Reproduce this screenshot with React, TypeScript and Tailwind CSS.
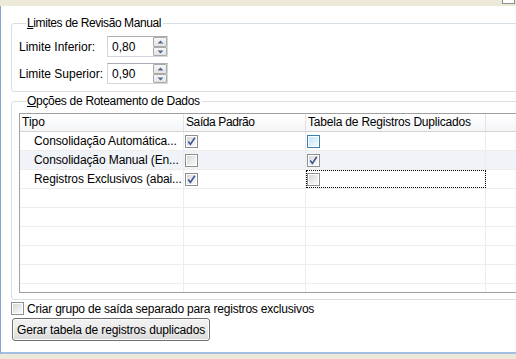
import React from "react";

function Check({ checked = false, hover = false }: { checked?: boolean; hover?: boolean }) {
  return (
    <div
      className={
        hover
          ? "relative w-[13px] h-[13px] shrink-0 border border-[#3C7FB1] bg-white p-[1px]"
          : "relative w-[13px] h-[13px] shrink-0 border border-[#8E8F8F] bg-white p-[1px]"
      }
    >
      <div
        className={
          hover
            ? "w-full h-full bg-linear-to-br from-[#C4E5F8] to-[#EEF8FE]"
            : "w-full h-full bg-linear-to-br from-[#D8D8D8] to-[#FAFAFA]"
        }
      />
      {checked && (
        <svg className="absolute left-0 top-0" width="11" height="11" viewBox="0 0 11 11">
          <path d="M2.3 5.6 L4.4 8.4 L8.8 1.8" stroke="#3D5497" strokeWidth="1.6" fill="none" />
        </svg>
      )}
    </div>
  );
}

function Spin({ value }: { value: string }) {
  return (
    <div className="flex h-[21px] w-[61px] border border-[#D3D6DB] border-t-[#ABADB3] bg-white">
      <div className="flex-1 pl-[4px] flex items-center leading-[14px]">{value}</div>
      <div className="flex flex-col w-[14px] gap-0">
        <div className="h-[10px] border border-[#A9A9A9] rounded-[1px] bg-linear-to-b from-[#F7F7F7] to-[#E3E3E3] flex items-center justify-center">
          <svg width="7" height="4" viewBox="0 0 7 4">
            <path d="M0.5 3.5 L3.5 0.5 L6.5 3.5 Z" fill="#4E6A96" />
          </svg>
        </div>
        <div className="h-[9px] border border-[#A9A9A9] rounded-[1px] bg-linear-to-b from-[#F7F7F7] to-[#E3E3E3] flex items-center justify-center">
          <svg width="7" height="4" viewBox="0 0 7 4">
            <path d="M0.5 0.5 L3.5 3.5 L6.5 0.5 Z" fill="#4E6A96" />
          </svg>
        </div>
      </div>
    </div>
  );
}

type Row = { t: string; a: boolean; b: boolean; hover?: boolean; shade?: boolean; focus?: boolean };

const rows: Row[] = [
  { t: "Consolidação Automática...", a: true, b: false, hover: true },
  { t: "Consolidação Manual (En...", a: false, b: true, shade: true },
  { t: "Registros Exclusivos (abai...", a: true, b: false, focus: true },
];

export default function App() {
  return (
    <div
      className="w-[516px] h-[359px] bg-[#ECE9D8] flex flex-col overflow-hidden text-[12px] text-black"
      style={{ fontFamily: '"Liberation Sans", Arial, sans-serif' }}
    >
      <div className="h-[6px] flex justify-end pr-[1px]">
        <div className="w-[13px] h-[4px] border border-t-0 border-[#8C8C8C] bg-white" />
      </div>
      <div className="h-[348px] bg-white border-l border-l-[#84A5CF] border-b-2 border-b-[#A6BEE4] pl-[10px] flex flex-col overflow-hidden">
        <fieldset className="mt-[10px] w-[530px] border border-[#D5DFE5] rounded-[3px] pl-[7px] pb-[7px] shrink-0">
          <legend className="ml-[7px] pl-[1px] pr-[2px] leading-[14px] tracking-[-0.4px]">
            <span className="underline">L</span>imites de Revisão Manual
          </legend>
          <div className="pt-[6px] flex flex-col gap-[6px]">
            <div className="flex items-center">
              <div className="w-[88px]">Limite Inferior:</div>
              <Spin value="0,80" />
            </div>
            <div className="flex items-center">
              <div className="w-[88px]">Limite Superior:</div>
              <Spin value="0,90" />
            </div>
          </div>
        </fieldset>
        <fieldset className="mt-[2px] w-[530px] border border-[#D5DFE5] rounded-[3px] pl-[7px] pb-[6px] shrink-0">
          <legend className="ml-[7px] pl-[1px] pr-[2px] leading-[14px] tracking-[-0.3px]">
            <span className="underline">O</span>pções de Roteamento de Dados
          </legend>
          <div className="pt-[5px]">
            <div className="h-[180px] border-l border-t border-b border-[#A0A0A0] overflow-hidden flex flex-col">
              <div className="h-[18px] shrink-0 flex border-b border-[#D5D5D5] bg-linear-to-b from-white to-[#F4F5F7] leading-[17px]">
                <div className="w-[164px] border-r border-[#E2E3E5] pl-[2px]">Tipo</div>
                <div className="w-[122px] border-r border-[#E2E3E5] pl-[2px] tracking-[-0.4px]">Saída Padrão</div>
                <div className="w-[180px] border-r border-[#E2E3E5] pl-[2px] tracking-[-0.2px]">Tabela de Registros Duplicados</div>
                <div className="flex-1" />
              </div>
              {rows.map((r, i) => (
                <div
                  key={i}
                  className={
                    r.shade
                      ? "h-[19px] shrink-0 flex border-b border-[#EDEDED] bg-[#F0F3F7]"
                      : "h-[19px] shrink-0 flex border-b border-[#EDEDED]"
                  }
                >
                  <div className="w-[164px] border-r border-[#EDEDED] pl-[14px] flex items-center whitespace-nowrap overflow-hidden tracking-[-0.1px]">
                    {r.t}
                  </div>
                  <div className="w-[122px] border-r border-[#EDEDED] pl-[1px] flex items-center">
                    <Check checked={r.a} />
                  </div>
                  <div
                    className={
                      r.focus
                        ? "w-[180px] border-r border-[#EDEDED] pl-[1px] flex items-center outline-1 outline-dotted outline-black -outline-offset-1"
                        : "w-[180px] border-r border-[#EDEDED] pl-[1px] flex items-center"
                    }
                  >
                    <Check checked={r.b} hover={r.hover} />
                  </div>
                  <div className="flex-1" />
                </div>
              ))}
              {[0, 1, 2, 3, 4, 5].map((k) => (
                <div key={k} className="h-[19px] shrink-0 flex border-b border-[#EDEDED]">
                  <div className="w-[164px] border-r border-[#EDEDED]" />
                  <div className="w-[122px] border-r border-[#EDEDED]" />
                  <div className="w-[180px] border-r border-[#EDEDED]" />
                  <div className="flex-1" />
                </div>
              ))}
            </div>
          </div>
        </fieldset>
        <div className="mt-[1px] h-[15px] flex items-center gap-[3px] shrink-0">
          <Check />
          <span className="leading-[14px] tracking-[-0.2px]">Criar grupo de saída separado para registros exclusivos</span>
        </div>
        <div className="mt-[2px] shrink-0">
          <button className="h-[23px] w-[198px] ml-[1px] border border-[#707070] rounded-[3px] bg-linear-to-b from-[#F2F2F2] via-[#EBEBEB] to-[#D8D8D8] text-[12px] leading-[14px] tracking-[-0.15px] text-black shadow-[inset_0_0_0_1px_#FCFCFC]">
            Gerar tabela de registros duplicados
          </button>
        </div>
      </div>
      <div className="flex-1" />
    </div>
  );
}
